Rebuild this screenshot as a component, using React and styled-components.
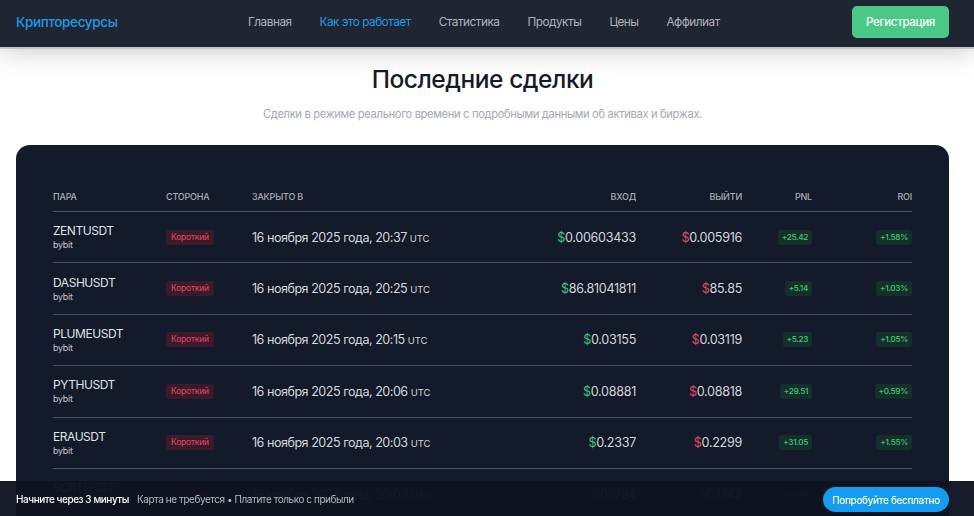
import React from "react";
import styled, { createGlobalStyle } from "styled-components";

const trades = [
  { pair: "ZENTUSDT", time: "20:37", entry: "0.00603433", exit: "0.005916", pnl: "+25.42", roi: "+1.58%" },
  { pair: "DASHUSDT", time: "20:25", entry: "86.81041811", exit: "85.85", pnl: "+5.14", roi: "+1.03%" },
  { pair: "PLUMEUSDT", time: "20:15", entry: "0.03155", exit: "0.03119", pnl: "+5.23", roi: "+1.05%" },
  { pair: "PYTHUSDT", time: "20:06", entry: "0.08881", exit: "0.08818", pnl: "+29.51", roi: "+0.59%" },
  { pair: "ERAUSDT", time: "20:03", entry: "0.2337", exit: "0.2299", pnl: "+31.05", roi: "+1.55%" },
  { pair: "SCRTUSDT", time: "20:03", entry: "0.1784", exit: "0.1742", pnl: "+10.64", roi: "+0.97%" },
];

const navItems = ["Главная", "Как это работает", "Статистика", "Продукты", "Цены", "Аффилиат"];

const App = () => {
  return (
    <>
      <GlobalStyle />
      <Page>
        <Header>
          <Logo>Крипторесурсы</Logo>
          <Nav>
            {navItems.map((item) => (
              <NavLink key={item} active={item === "Как это работает"}>
                {item}
              </NavLink>
            ))}
          </Nav>
          <RegisterButton>Регистрация</RegisterButton>
        </Header>

        <Main>
          <Title>Последние сделки</Title>
          <Subtitle>
            Сделки в режиме реального времени с подробными данными об активах и биржах.
          </Subtitle>

          <Card>
            <HeadRow>
              <HeadCell>Пара</HeadCell>
              <HeadCell>Сторона</HeadCell>
              <HeadCell>Закрыто в</HeadCell>
              <HeadCell align="right">Вход</HeadCell>
              <HeadCell align="right">Выйти</HeadCell>
              <HeadCell align="right">PNL</HeadCell>
              <HeadCell align="right">ROI</HeadCell>
            </HeadRow>

            {trades.map((t, i) => (
              <Row key={t.pair} faded={i === trades.length - 1}>
                <PairCell>
                  <PairName>{t.pair}</PairName>
                  <Exchange>bybit</Exchange>
                </PairCell>
                <Cell>
                  <SideBadge>Короткий</SideBadge>
                </Cell>
                <DateCell>
                  16 ноября 2025 года, {t.time} <Utc>UTC</Utc>
                </DateCell>
                <Price>
                  <Dollar tone="up">$</Dollar>
                  {t.entry}
                </Price>
                <Price>
                  <Dollar tone="down">$</Dollar>
                  {t.exit}
                </Price>
                <Cell align="right">
                  <GainBadge>{t.pnl}</GainBadge>
                </Cell>
                <Cell align="right">
                  <GainBadge>{t.roi}</GainBadge>
                </Cell>
              </Row>
            ))}
          </Card>
        </Main>

        <Banner>
          <BannerText>
            <strong>Начните через 3 минуты</strong>
            <span>Карта не требуется • Платите только с прибыли</span>
          </BannerText>
          <TryButton>Попробуйте бесплатно</TryButton>
        </Banner>
      </Page>
    </>
  );
};

export default App;

const GlobalStyle = createGlobalStyle`
  html, body {
    margin: 0;
    padding: 0;
    height: 100%;
    overflow: hidden;
    background: #ffffff;
  }
  body {
    font-family: Inter, "Noto Sans", sans-serif;
  }
`;

const Page = styled.div`
  height: 100vh;
  overflow: hidden;
  background: #ffffff;
`;

const Header = styled.header`
  position: relative;
  z-index: 2;
  box-sizing: border-box;
  height: 47px;
  display: flex;
  align-items: center;
  padding: 0 25px 4px 16px;
  background: #202532;
  box-shadow: 0 2px 0 #c4c6ca, 0 4px 26px rgba(0, 0, 0, 0.22);
`;

const Logo = styled.div`
  width: 232px;
  color: #1f9ae6;
  font-size: 13.5px;
  font-weight: 500;
  letter-spacing: -0.35px;
`;

const Nav = styled.nav`
  flex: 1;
  display: flex;
  align-items: center;
  gap: 28px;
`;

const NavLink = styled.a`
  color: ${(props) => (props.active ? "#1f9ae6" : "#aeb2bb")};
  font-size: 11.8px;
  letter-spacing: -0.5px;
  cursor: pointer;
`;

const RegisterButton = styled.button`
  height: 32px;
  width: 97px;
  border: none;
  border-radius: 5px;
  background: #4ac986;
  color: #ffffff;
  font-family: inherit;
  font-size: 11.5px;
  font-weight: 500;
  letter-spacing: -0.35px;
  cursor: pointer;
`;

const Main = styled.main`
  padding: 17px 25px 0 16px;
  display: flex;
  flex-direction: column;
  align-items: center;
`;

const Title = styled.h1`
  margin: 0;
  font-size: 24.5px;
  font-weight: 500;
  color: #151a28;
  line-height: 30px;
  letter-spacing: -0.45px;
`;

const Subtitle = styled.p`
  margin: 12px 0 0;
  font-size: 11.2px;
  color: #a3a8b8;
  line-height: 16px;
  letter-spacing: -0.35px;
`;

const Card = styled.div`
  align-self: stretch;
  margin-top: 23px;
  padding: 45px 37px 40px;
  background: #131a29;
  border-radius: 14px;
`;

const grid = `
  display: grid;
  grid-template-columns: 113px 86px 1fr 124px 106px 70px 100px;
  align-items: center;
`;

const HeadRow = styled.div`
  ${grid}
  height: 21px;
  align-items: start;
  border-bottom: 1.6px solid #4a505d;
`;

const HeadCell = styled.div`
  font-size: 9px;
  font-weight: 500;
  text-transform: uppercase;
  color: #a9adb7;
  line-height: 14px;
  letter-spacing: -0.2px;
  text-align: ${(props) => props.align || "left"};
`;

const Row = styled.div`
  ${grid}
  box-sizing: border-box;
  height: 51.4px;
  border-bottom: 1.6px solid #4a505d;
  opacity: ${(props) => (props.faded ? 0.85 : 1)};
`;

const Cell = styled.div`
  display: flex;
  justify-content: ${(props) => (props.align === "right" ? "flex-end" : "flex-start")};
`;

const PairCell = styled.div`
  display: flex;
  flex-direction: column;
`;

const PairName = styled.span`
  font-size: 12px;
  color: #dfe2e8;
  line-height: 16px;
  letter-spacing: -0.45px;
`;

const Exchange = styled.span`
  font-size: 8.8px;
  color: #c6cad2;
  line-height: 12px;
  letter-spacing: -0.2px;
`;

const SideBadge = styled.span`
  padding: 2px 5px;
  border-radius: 3px;
  background: #3a1b2a;
  color: #e54865;
  font-size: 8.5px;
  line-height: 11px;
  letter-spacing: -0.2px;
`;

const DateCell = styled.div`
  font-size: 12.6px;
  color: #d3d6dd;
  letter-spacing: -0.5px;
`;

const Utc = styled.span`
  font-size: 9.5px;
  letter-spacing: -0.1px;
`;

const Price = styled.div`
  text-align: right;
  font-size: 12.6px;
  color: #d3d6dd;
  letter-spacing: -0.3px;
`;

const Dollar = styled.span`
  color: ${(props) => (props.tone === "up" ? "#3fc876" : "#e54865")};
`;

const GainBadge = styled.span`
  padding: 2px 4px;
  border-radius: 3px;
  background: #15302a;
  color: #3fcb78;
  font-size: 8.2px;
  font-weight: 500;
  line-height: 11px;
  letter-spacing: -0.3px;
`;

const Banner = styled.div`
  position: fixed;
  left: 0;
  right: 0;
  bottom: 0;
  z-index: 3;
  height: 35px;
  display: flex;
  align-items: center;
  justify-content: space-between;
  padding: 0 25px 0 16px;
  background: rgba(14, 19, 31, 0.96);
`;

const BannerText = styled.div`
  display: flex;
  align-items: center;
  gap: 8px;
  font-size: 10px;
  letter-spacing: -0.45px;

  strong {
    color: #ffffff;
    font-weight: 500;
  }

  span {
    color: #b4b8c2;
  }
`;

const TryButton = styled.button`
  height: 25px;
  width: 126px;
  margin-top: 2px;
  border: none;
  border-radius: 13px;
  background: #149cf0;
  color: #ffffff;
  font-family: inherit;
  font-size: 10px;
  font-weight: 500;
  letter-spacing: -0.35px;
  white-space: nowrap;
  cursor: pointer;
`;
